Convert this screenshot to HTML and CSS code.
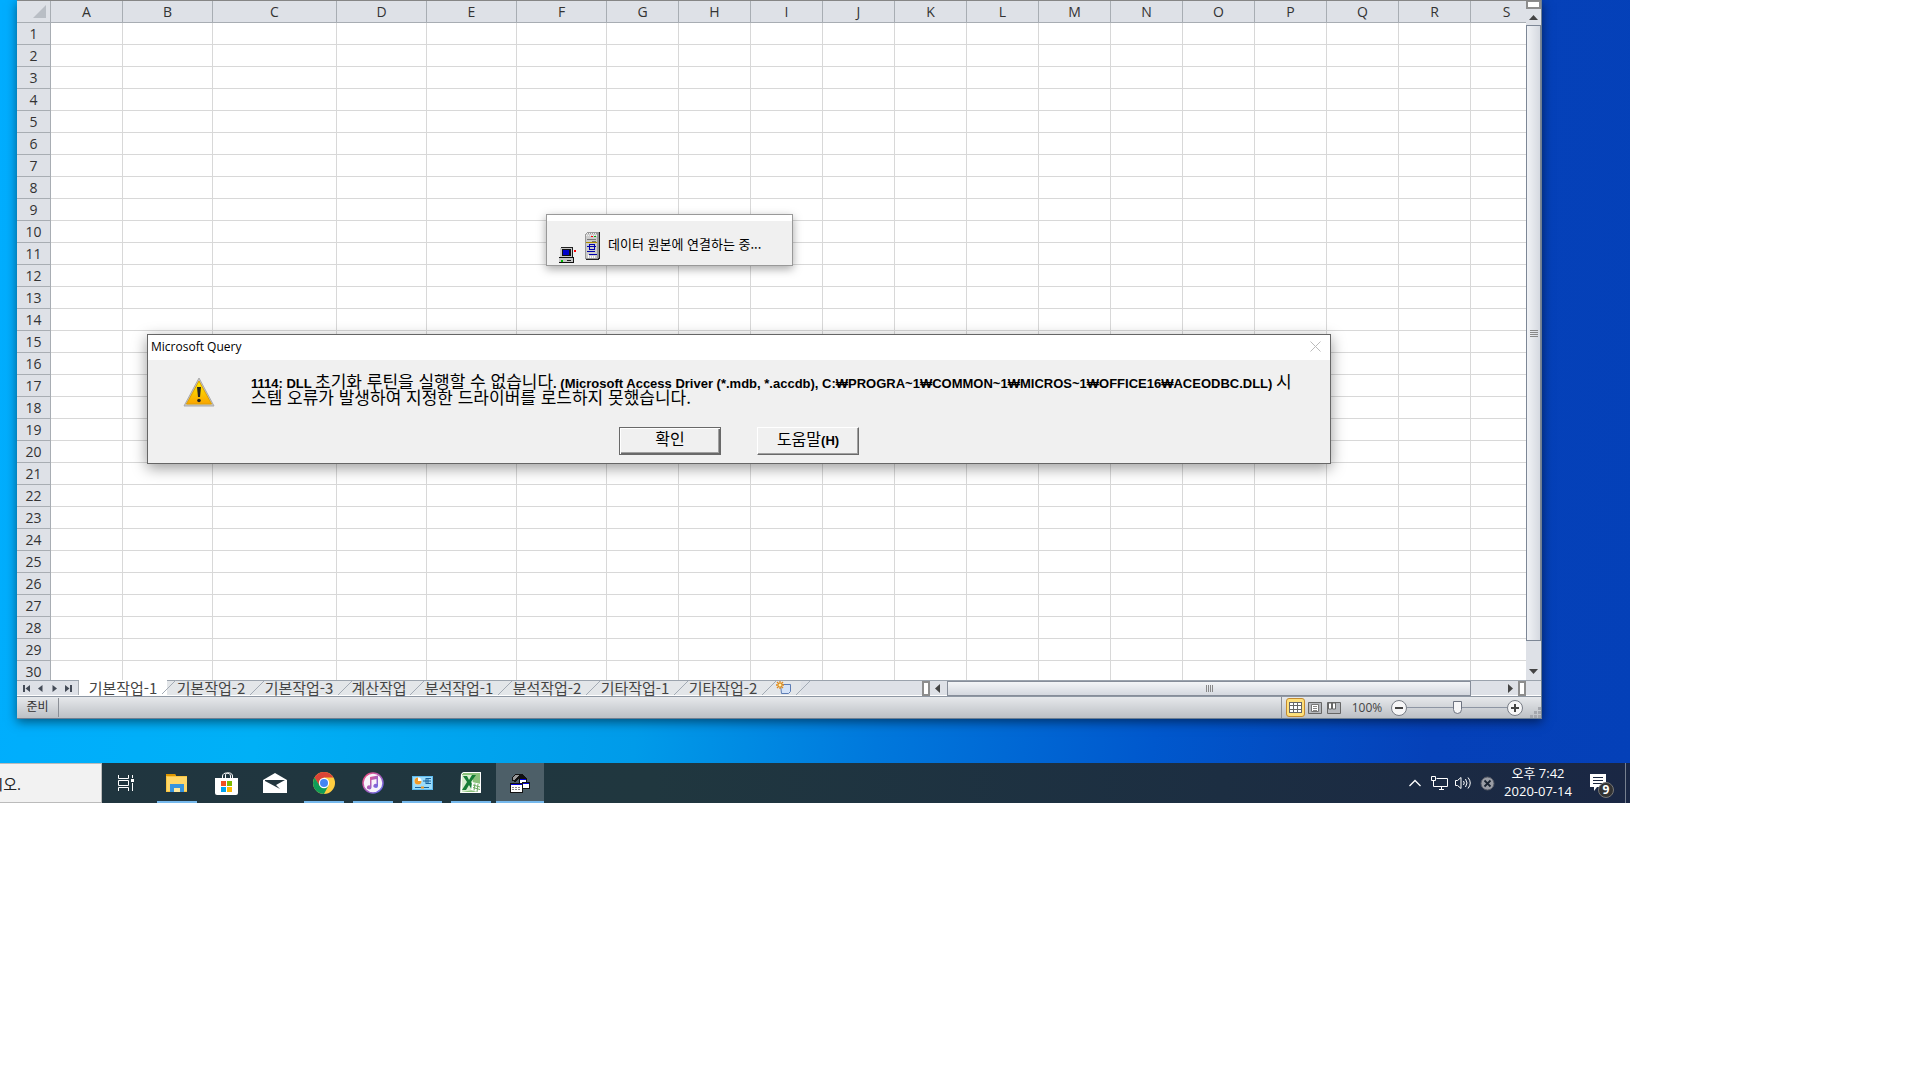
FILE: index.html
```html
<!DOCTYPE html>
<html lang="ko">

<head>
    <meta charset="UTF-8">
    <meta name="viewport" content="width=device-width, initial-scale=1.0">
    <title>Microsoft Query</title>
    <link rel="stylesheet" href="styles.css">
    <script src="script.js" defer></script>
</head>

<body>
    <main class="desktop">

        <!-- Spreadsheet window -->
        <section class="workbook">
            <div class="sheet-area">
                <div class="sheet">
                    <table class="grid">
                        <colgroup id="grid-cols"></colgroup>
                        <thead>
                            <tr id="grid-head"></tr>
                        </thead>
                        <tbody id="grid-body"></tbody>
                    </table>
                </div>
                <div class="vscroll">
                    <div class="split-top"></div>
                    <button class="scroll-btn" aria-label="위로"><svg width="9" height="5"><path d="M0 5L4.500 0L9 5z" fill="#444"/></svg></button>
                    <div class="vthumb"><i></i><i></i><i></i><i></i></div>
                    <button class="scroll-btn scroll-down" aria-label="아래로"><svg width="9" height="5"><path d="M0 0H9L4.500 5z" fill="#444"/></svg></button>
                </div>
            </div>

            <!-- Sheet tabs -->
            <div class="tab-row">
                <div class="tab-nav">
                    <button aria-label="처음"><svg width="7" height="7"><path d="M0 0h2v7H0zM7 0v7L2.500 3.500z" fill="#444b57"/></svg></button>
                    <button aria-label="이전"><svg width="7" height="7"><path d="M5.500 0v7L1 3.500z" fill="#444b57"/></svg></button>
                    <button aria-label="다음"><svg width="7" height="7"><path d="M1.500 0v7L6 3.500z" fill="#444b57"/></svg></button>
                    <button aria-label="마지막"><svg width="7" height="7"><path d="M5 0h2v7H5zM0 0v7l4.500-3.500z" fill="#444b57"/></svg></button>
                </div>
                <div class="tabs">
                    <button class="tab active">기본작업-1</button>
                    <button class="tab">기본작업-2</button>
                    <button class="tab">기본작업-3</button>
                    <button class="tab short">계산작업</button>
                    <button class="tab">분석작업-1</button>
                    <button class="tab">분석작업-2</button>
                    <button class="tab">기타작업-1</button>
                    <button class="tab">기타작업-2</button>
                    <button class="tab new-tab" aria-label="워크시트 삽입">
                        <svg width="16" height="14" viewBox="0 0 16 14">
                            <path d="M4.500 3.500h10v7l-2 2H5.500z" fill="#d3e2f8" stroke="#5d7db5"/>
                            <path d="M4 0v8M0 4h8M1 1l6 6M7 1L1 7" stroke="#e08a1c" stroke-width="1.300"/>
                            <circle cx="4" cy="4" r="1.500" fill="#fff3b0"/>
                        </svg>
                    </button>
                </div>
                <div class="hscroll">
                    <div class="split-side"></div>
                    <button class="scroll-btn" aria-label="왼쪽"><svg width="5" height="9"><path d="M5 0v9L0 4.500z" fill="#444"/></svg></button>
                    <div class="hthumb"><i></i><i></i><i></i><i></i></div>
                    <button class="scroll-btn" aria-label="오른쪽"><svg width="5" height="9"><path d="M0 0v9l5-4.500z" fill="#444"/></svg></button>
                    <div class="split-side"></div>
                </div>
            </div>

            <!-- Status bar -->
            <footer class="status-bar">
                <span class="status-text">준비</span>
                <div class="view-tools">
                    <button class="view-btn selected" aria-label="기본">
                        <svg width="13" height="11"><path d="M0 0h13v11H0z" fill="#666"/><path d="M1 1h3v2H1zM5 1h3v2H5zM9 1h3v2H9zM1 4h3v3H1zM5 4h3v3H5zM9 4h3v3H9zM1 8h3v2H1zM5 8h3v2H5zM9 8h3v2H9z" fill="#fff"/></svg>
                    </button>
                    <button class="view-btn" aria-label="페이지 레이아웃">
                        <svg width="14" height="12"><path d="M.5.500h13v11H.5z" fill="#b5b8bd" stroke="#666"/><path d="M3.500 2.500h7v7h-7z" fill="#fff" stroke="#777"/><path d="M5 4.500h4M5 6.500h4M5 8.500h4" stroke="#888"/></svg>
                    </button>
                    <button class="view-btn" aria-label="페이지 나누기 미리 보기">
                        <svg width="14" height="12"><path d="M.5.500h13v11H.5z" fill="#b5b8bd" stroke="#666"/><path d="M1.500 1h3v6h-3zM5.500 1h3v6h-3z" fill="#fff" stroke="#666"/></svg>
                    </button>
                    <span class="zoom-value">100%</span>
                    <button class="round-btn" aria-label="축소"><svg width="16" height="16"><circle cx="8" cy="8" r="7.500" fill="#f6f6f7" stroke="#777c85"/><path d="M4 8h8" stroke="#444" stroke-width="2"/></svg></button>
                    <input class="zoom-slider" type="range" min="0" max="200" value="100" aria-label="확대/축소">
                    <button class="round-btn" aria-label="확대"><svg width="16" height="16"><circle cx="8" cy="8" r="7.500" fill="#f6f6f7" stroke="#777c85"/><path d="M4 8h8M8 4v8" stroke="#444" stroke-width="2"/></svg></button>
                    <svg class="size-grip" width="11" height="11"><path d="M8 0h3v3H8zM4 4h3v3H4zM8 4h3v3H8zM0 8h3v3H0zM4 8h3v3H4zM8 8h3v3H8z" fill="#a4a7ad"/></svg>
                </div>
            </footer>
        </section>

        <!-- Connecting window -->
        <section class="connect-window">
            <svg class="pc-icon" width="17" height="17" shape-rendering="crispEdges">
                <path d="M2 0h12v11H2z" fill="#222"/>
                <path d="M1 1h12v9H1z" fill="#c8c8c8"/>
                <path d="M3 2h9v7H3z" fill="#111"/>
                <path d="M4 3h6v5H4z" fill="#00c"/>
                <path d="M0 10h15v6H0z" fill="#111"/>
                <path d="M0 11h14v4H0z" fill="#c8c8c8"/>
                <path d="M2 13h2v2H2z" fill="#0b0"/>
                <path d="M8 13h4v1H8z" fill="#222"/>
                <path d="M15 3h2v2h-2z" fill="#f00"/>
            </svg>
            <svg class="server-icon" width="15" height="28" shape-rendering="crispEdges">
                <path d="M2 0h13v26l-2 2H1z" fill="#222"/>
                <path d="M0 2l2-2h11l1 1v24l-2 2H0z" fill="#999"/>
                <path d="M1 2h11v24H1z" fill="#ccc"/>
                <path d="M2 1h10M1 3h11" stroke="#eee" stroke-dasharray="1 1"/>
                <path d="M6 4h2v1H6z" fill="#f00"/>
                <path d="M9 4h2v1H9z" fill="#0a0"/>
                <path d="M2 7h9v1H2zM7 9h4v1H7z" fill="#777"/>
                <path d="M1 10h11v1H1z" fill="#aa8a00"/>
                <path d="M4 12h5v1H4zM2 14h9v1H2zM4 17h6v1H4zM2 19h8v1H2zM4 22h8v1H4z" fill="#00a"/>
                <path d="M3 23h1v3H3zM5 24h1v2H5zM7 24h1v2H7zM9 24h1v2H9z" fill="#fff"/>
                <path d="M4 12h1v5H4zM9 12h1v5H9z" fill="#00a"/>
            </svg>
            <span class="connect-text">데이터 원본에 연결하는 중...</span>
        </section>

        <!-- Error dialog -->
        <section class="dialog" role="alertdialog" aria-labelledby="dialog-title">
            <header class="dialog-title">
                <span id="dialog-title">Microsoft Query</span>
                <button class="dialog-close" aria-label="닫기"><svg width="11" height="11"><path d="M.5.500l10 10M10.500.5l-10 10" stroke="#bbb"/></svg></button>
            </header>
            <div class="dialog-body">
                <svg class="warning-icon" width="32" height="32" viewBox="0 0 32 32">
                    <defs>
                        <linearGradient id="warn" x1="0" y1="0" x2="0" y2="1">
                            <stop offset="0" stop-color="#fff000"/>
                            <stop offset="1" stop-color="#f9a400"/>
                        </linearGradient>
                    </defs>
                    <path d="M16 2L31 30H1z" fill="#c6c6c6" stroke="#aaa" stroke-linejoin="round"/>
                    <path d="M16 5L28.500 28h-25z" fill="url(#warn)" stroke="#e0a000"/>
                    <path d="M14 11h4l-1 10h-2z" fill="#222"/>
                    <circle cx="16" cy="24.500" r="1.800" fill="#222"/>
                </svg>
                <p class="message">1114: DLL <span class="ko">초기화 루틴을 실행할 수 없습니다</span>. (Microsoft Access Driver (*.mdb, *.accdb), C:₩PROGRA~1₩COMMON~1₩MICROS~1₩OFFICE16₩ACEODBC.DLL) <span class="ko">시<br>스템 오류가 발생하여 지정한 드라이버를 로드하지 못했습니다.</span></p>
            </div>
            <div class="dialog-buttons">
                <button class="btn default"><span class="ko">확인</span></button>
                <button class="btn"><span class="ko">도움말</span>(H)</button>
            </div>
        </section>

        <!-- Taskbar -->
        <nav class="taskbar">
            <div class="search-box">
                <input type="text" value="시오." aria-label="검색">
            </div>
            <div class="task-list">
                <button class="task task-view" aria-label="작업 보기">
                    <svg width="18" height="18" fill="none" stroke="#fff"><path d="M1.500 1v3.500h10V1M1.500 17v-3.500h10V17M1.500 6.500h10v5h-10zM15.500 1v3M15.500 9v8"/><path d="M14 5h3v3h-3z" fill="#fff" stroke="none"/></svg>
                </button>
                <button class="task open" aria-label="파일 탐색기">
                    <svg width="22" height="20"><path d="M0 1h9l1 2h11v16H0z" fill="#f9c440"/><path d="M0 1h9l1 2H0z" fill="#dd9600"/><path d="M1 4h20v14H1z" fill="#ffd768"/><path d="M4 11h14v8h-4v-4H8v4H4z" fill="#3693dd"/><path d="M8 15h6v4H8z" fill="#ffe9a0"/></svg>
                </button>
                <button class="task" aria-label="스토어">
                    <svg width="23" height="23"><path d="M7.500 6V4c0-4 8-4 8 0v2M10.500 6V3c0-3 7-3 7 1v2" fill="none" stroke="#fff"/><path d="M0 6h23v15q0 2-2 2H2q-2 0-2-2z" fill="#fff"/><path d="M6 9h5v5H6z" fill="#f25022"/><path d="M12 9h5v5h-5z" fill="#7fba00"/><path d="M6 15h5v5H6z" fill="#00a4ef"/><path d="M12 15h5v5h-5z" fill="#ffb900"/></svg>
                </button>
                <button class="task" aria-label="메일">
                    <svg width="24" height="20"><path d="M0 7l12-7 12 7v13H0z" fill="#fff"/><path d="M2 7h20l-9 5 4 4L2 8z" fill="#22353e"/></svg>
                </button>
                <button class="task open" aria-label="Chrome">
                    <svg width="22" height="22"><circle cx="11" cy="11" r="11" fill="#ffcd40"/><path d="M1.500 5.500A11 11 0 0 1 20.500 5.500H11L6 13.500z" fill="#db4437"/><path d="M1.500 5.500A11 11 0 0 0 11 22L15.500 13.500 6.500 13.500z" fill="#0f9d58"/><circle cx="11" cy="11" r="5.200" fill="#fff"/><circle cx="11" cy="11" r="4" fill="#4285f4"/></svg>
                </button>
                <button class="task open" aria-label="iTunes">
                    <svg width="22" height="22">
                        <defs><linearGradient id="note" x1="0" y1="0" x2="1" y2="1"><stop offset="0" stop-color="#fb4f7d"/><stop offset="1" stop-color="#5b6cf5"/></linearGradient></defs>
                        <circle cx="11" cy="11" r="10" fill="#f7f3fb" stroke="url(#note)" stroke-width="1.500"/>
                        <path d="M8 5l8-1.500V14a2.300 2 0 1 1-1.500-2V7L9.500 8v7.500A2.300 2 0 1 1 8 13.500z" fill="url(#note)"/>
                    </svg>
                </button>
                <button class="task open" aria-label="제어판">
                    <svg width="21" height="16"><path d="M0 1h21v14H0z" fill="#5fbcf0"/><path d="M1 2h19v12H1z" fill="#9adcfb"/><circle cx="6" cy="6" r="3.500" fill="#fff"/><path d="M6 6V2.500A3.500 3.500 0 1 0 9.500 6z" fill="#f09a28"/><path d="M11 6h3M14 3v6M14 3.500h5M14 6h5M14 8.500h5M16 4v4" stroke="#16639d"/><path d="M3 12.500h14" stroke="#16639d"/><path d="M9 11.500h3v2H9z" fill="#f09a28"/></svg>
                </button>
                <button class="task open" aria-label="Excel">
                    <svg width="23" height="22"><path d="M1 2l2-2h18v21H0z" fill="#e4f3df"/><path d="M1.500 2.500l2-2h17v20h-19z" fill="#8bc27c" stroke="#fff"/><path d="M2 3h11v15L2 20z" fill="#d6edce"/><path d="M3 4h4l2 4 3-5h4l-5 7 5 8h-4l-3-5-3 5H2l5-8z" fill="#167c36"/><path d="M12 10l9 2-1 9-9-3z" fill="#fff"/><path d="M13 13l7 2M13 15.500l7 2M15 11.500l-1 7M18 12l-1 8" stroke="#6baa60"/></svg>
                </button>
                <button class="task open current" aria-label="Microsoft Query">
                    <svg width="20" height="21" shape-rendering="crispEdges"><path d="M2 8V4l3-3h7l4 3v4h-4l-3-3-3 4z" fill="#111"/><path d="M3 7V4l3-2h3L5 7z" fill="#999"/><path d="M9 5h8v8H9z" fill="#111"/><path d="M10 6h6v6h-6z" fill="#fff"/><path d="M10 6h6v1h-6z" fill="#00d"/><path d="M12 9h8v7h-8z" fill="#111"/><path d="M13 10h6v5h-6z" fill="#fff"/><path d="M13 10h6v1h-6z" fill="#00d"/><path d="M0 10h13v10H0z" fill="#111"/><path d="M1 11h11v8H1z" fill="#fff"/><path d="M1 11h11v1H1z" fill="#00d"/><path d="M2 14.500h9M2 16.500h9" stroke="#888" stroke-dasharray="2 1"/></svg>
                </button>
            </div>
            <div class="tray">
                <button class="tray-btn" aria-label="숨겨진 아이콘"><svg width="12" height="8"><path d="M.5 7L6 1.500 11.500 7" fill="none" stroke="#fff" stroke-width="1.300"/></svg></button>
                <button class="tray-btn" aria-label="네트워크"><svg width="17" height="14" fill="none" stroke="#fff"><path d="M5.500 2.500h11v8H5M8 13.500h5M10.500 10.500v3M2.500 6v4.500H5"/><path d="M.5.500h4v4h-4z"/><path d="M2.500 4.500v2"/></svg></button>
                <button class="tray-btn" aria-label="볼륨"><svg width="17" height="14" fill="none" stroke="#fff"><path d="M.5 4.500h2l3.500-3v11l-3.500-3h-2zM8.500 5q1.500 2 0 4M10.500 3q3 4 0 8M13 1.500q4.500 5.500 0 11"/></svg></button>
                <button class="tray-btn" aria-label="보안"><svg width="15" height="15"><circle cx="7.500" cy="7.500" r="6.500" fill="#9a9da5" stroke="#555a66"/><path d="M4.500 4.500l6 6M10.500 4.500l-6 6" stroke="#1b2533" stroke-width="1.800"/></svg></button>
                <button class="clock"><span>오후 7:42</span><span>2020-07-14</span></button>
                <button class="notice" aria-label="알림">
                    <svg width="16" height="17"><path d="M0 0h16v13H7l-3 4v-4H0z" fill="#fff"/><path d="M3 3.500h10M3 6.500h10M3 9.500h10" stroke="#1b2740"/></svg>
                    <span class="badge">9</span>
                </button>
                <div class="show-desktop"></div>
            </div>
        </nav>
    </main>
</body>

</html>
```
FILE: styles.css
```css
/* Colors shared by the window chrome */
:root {
    --chrome: #dee1e7;
    --chrome-line: #a8adb3;
    --grid-line: #d8d8d8;
    --dialog-bg: #f0f0f0;
    --ui-font: "Open Sans", "Noto Sans CJK KR", sans-serif;
    --ko-font: "Noto Sans CJK KR", sans-serif;
}

* {
    box-sizing: border-box;
}

body {
    margin: 0;
    background: #fff;
    font-family: var(--ui-font);
    font-size: 13px;
}

button,
input {
    margin: 0;
    padding: 0;
    border: 0;
    background: none;
    font: inherit;
    color: inherit;
}

svg {
    display: block;
    flex: none;
}

/* Desktop */
.desktop {
    position: relative;
    width: calc(100% - 290px);
    overflow: hidden;
    background: linear-gradient(97deg, #00adff 0%, #00b0f6 20%, #009be9 42%, #0078dc 56%, #0058cd 72%, #0541b9 88%, #0440b8 100%);
}

/* Spreadsheet window */
.workbook {
    margin: 0 88px 44px 17px;
    border: 1px solid #6d7f92;
    border-width: 0 1px 1px 0;
    background: var(--chrome);
    box-shadow: 0 3px 10px rgba(0, 0, 0, 0.5);
}

.sheet-area {
    display: flex;
    height: 680px;
}

.sheet {
    flex: 1;
    min-width: 0;
    overflow: hidden;
    background: #fff;
}

.grid {
    width: 1526px;
    table-layout: fixed;
    border-collapse: separate;
    border-spacing: 0;
    border-top: 1px solid #868686;
}

.grid th,
.grid td {
    height: 22px;
    padding: 0;
    border-right: 1px solid var(--grid-line);
    border-bottom: 1px solid var(--grid-line);
    line-height: 20px;
}

.grid th {
    background: var(--chrome);
    border-color: var(--chrome-line);
    font-size: 14px;
    font-weight: normal;
    color: #333;
    text-align: center;
}

.corner svg {
    margin: 0 4px 0 auto;
}

/* Scroll bars */
.vscroll {
    display: flex;
    flex-direction: column;
    width: 15px;
    border-top: 1px solid #868686;
    background: var(--chrome);
}

.split-top {
    height: 8px;
    border: 2px solid #8d8d8d;
    border-top-width: 1px;
    background: #fff;
}

.scroll-btn {
    display: flex;
    align-items: center;
    justify-content: center;
    width: 15px;
    height: 16px;
}

.vthumb {
    display: flex;
    flex: 1;
    flex-direction: column;
    align-items: center;
    justify-content: center;
    gap: 1px;
    margin-bottom: 22px;
    border: 1px solid #7d8796;
    background: linear-gradient(90deg, #f1f3f6, #d5d9e0);
}

.vthumb i {
    width: 8px;
    height: 1px;
    background: #888;
}

.scroll-down {
    margin-bottom: 1px;
}

.hscroll {
    display: flex;
    flex: 1;
    align-items: center;
    margin-right: 15px;
}

.split-side {
    width: 8px;
    height: 15px;
    border: 2px solid #8d8d8d;
    background: #fff;
}

.hthumb {
    display: flex;
    flex: 1;
    align-items: center;
    justify-content: center;
    gap: 1px;
    height: 15px;
    margin: 0 32px 0 2px;
    border: 1px solid #868d99;
    background: linear-gradient(#f4f5f7, #d4d8df);
}

.hthumb i {
    width: 1px;
    height: 7px;
    background: #888;
}

/* Sheet tabs */
.tab-row {
    display: flex;
    height: 16px;
    border-top: 1px solid #9ba3ad;
    border-bottom: 1px solid #fff;
}

.tab-nav {
    display: flex;
    align-items: center;
    justify-content: space-between;
    width: 62px;
    padding: 0 6px;
    border-right: 1px solid var(--chrome-line);
}

.tabs {
    display: flex;
    width: 843px;
}

.tab {
    position: relative;
    width: 88px;
    height: 14px;
    background: #e3e6e9;
    font-family: var(--ko-font);
    font-size: 15px;
    line-height: 12px;
    color: #444;
    white-space: nowrap;
}

/* Slanted edge between two tabs */
.tab::after {
    content: "";
    position: absolute;
    top: 0;
    right: -9px;
    z-index: 1;
    width: 14px;
    height: 14px;
    background: linear-gradient(135deg, transparent 47%, #a3abb5 47%, #a3abb5 53%, transparent 53%);
}

.tab.active {
    margin-top: -1px;
    height: 15px;
    background: #fff;
}

.tab.short {
    width: 72px;
}

.tab.new-tab {
    display: flex;
    align-items: center;
    justify-content: center;
    width: 34px;
}

/* Status bar */
.status-bar {
    display: flex;
    justify-content: space-between;
    height: 22px;
    border-top: 1px solid #8e97a3;
    background: linear-gradient(#e6e8eb, #bcc0c5);
}

.status-text {
    width: 42px;
    margin: 1px 0;
    border-right: 1px solid #8b8f96;
    font-size: 12px;
    line-height: 18px;
    text-align: center;
    color: #333;
}

.view-tools {
    display: flex;
    align-items: center;
    padding-left: 4px;
    border-left: 1px solid #8b8f96;
}

.view-btn {
    display: flex;
    align-items: center;
    justify-content: center;
    width: 19px;
    height: 19px;
}

.view-btn.selected {
    border: 1px solid #c28a30;
    border-radius: 3px;
    background: #ffe07a;
}

.zoom-value {
    width: 48px;
    font-size: 12px;
    line-height: 18px;
    text-align: center;
    color: #444;
}

.zoom-slider {
    width: 100px;
    height: 16px;
    appearance: none;
    background: linear-gradient(#8d95a3, #8d95a3) center / 100% 1px no-repeat;
}

.zoom-slider::-webkit-slider-thumb {
    appearance: none;
    width: 9px;
    height: 13px;
    border: 1px solid #6d7380;
    border-radius: 0 0 5px 5px;
    background: #f6f6f7;
}

.size-grip {
    align-self: flex-end;
    margin-left: 7px;
}

/* Connecting window */
.connect-window {
    position: absolute;
    top: 214px;
    left: 546px;
    display: flex;
    align-items: flex-end;
    width: 247px;
    height: 52px;
    padding: 0 0 1px 12px;
    border: 1px solid #999;
    background: linear-gradient(#fff 6px, var(--dialog-bg) 6px);
    box-shadow: 0 3px 9px rgba(0, 0, 0, 0.35);
    color: #000;
}

.pc-icon {
    margin-right: 9px;
}

.server-icon {
    margin: 0 8px 4px 0;
}

.connect-text {
    font-family: var(--ko-font);
    font-size: 13px;
    line-height: 20px;
    padding-bottom: 10px;
}

/* Error dialog */
.dialog {
    position: absolute;
    top: 334px;
    left: 147px;
    width: 1184px;
    border: 1px solid #666;
    background: var(--dialog-bg);
    box-shadow: 0 4px 14px rgba(0, 0, 0, 0.4);
    color: #000;
}

.dialog-title {
    display: flex;
    align-items: center;
    justify-content: space-between;
    height: 25px;
    padding: 0 9px 2px 3px;
    background: #fff;
    font-size: 12px;
}

.dialog-body {
    display: flex;
    gap: 36px;
    padding: 16px 0 0 35px;
}

.message {
    margin: 0;
    font: bold 13px/16px "Liberation Sans", "Noto Sans CJK KR", sans-serif;
    white-space: nowrap;
}

/* Hangul is larger than the Latin text but must not grow the line */
.ko {
    font-family: var(--ko-font);
    font-size: 17px;
    font-weight: normal;
    line-height: 0;
}

.dialog-buttons {
    display: flex;
    justify-content: center;
    gap: 36px;
    padding: 19px 0 8px;
}

.btn {
    width: 102px;
    height: 28px;
    border: 1px solid;
    border-color: #fff #696969 #696969 #fff;
    background: var(--dialog-bg);
    box-shadow: inset -1px -1px #a0a0a0;
    font: bold 13px/16px "Liberation Sans", sans-serif;
}

.btn .ko {
    font-size: 16px;
}

.btn.default {
    border-color: #696969;
    box-shadow: inset 1px 1px #fff, inset -1px -1px #696969, inset -2px -2px #a0a0a0;
}

/* Taskbar */
.taskbar {
    display: flex;
    height: 40px;
    background: linear-gradient(90deg, #20353f, #20373f 40%, #1c2e42 75%, #1a2744);
    color: #fff;
}

.search-box {
    display: flex;
    justify-content: flex-end;
    width: 102px;
    overflow: hidden;
    border: 1px solid #bbb;
    border-left: 0;
    background: #f2f2f2;
}

.search-box input {
    flex: none;
    width: 160px;
    padding-right: 80px;
    font-size: 15px;
    text-align: right;
    color: #222;
}

.task-list {
    display: flex;
    flex: 1;
    gap: 1px;
}

.task {
    display: flex;
    align-items: center;
    justify-content: center;
    width: 48px;
    height: 40px;
}

.task-view {
    margin-right: 2px;
}

.task.open {
    background: linear-gradient(#76b9ed, #76b9ed) center bottom / 40px 2px no-repeat;
}

.task.current {
    background: linear-gradient(#76b9ed, #76b9ed) center bottom / 48px 2px no-repeat #4d5f68;
}

.tray {
    display: flex;
    align-items: center;
}

.tray-btn {
    display: flex;
    align-items: center;
    justify-content: center;
    width: 24px;
    height: 40px;
}

.clock {
    display: flex;
    flex-direction: column;
    align-items: center;
    width: 78px;
    padding-bottom: 2px;
    font-size: 13px;
    line-height: 18px;
}

.notice {
    position: relative;
    display: flex;
    align-items: flex-start;
    width: 36px;
    height: 40px;
    padding: 11px 0 0 13px;
}

.badge {
    position: absolute;
    top: 19px;
    left: 21px;
    width: 16px;
    height: 16px;
    border: 1px solid #777;
    border-radius: 50%;
    background: #333;
    font-size: 12px;
    font-weight: bold;
    line-height: 14px;
    text-align: center;
}

.show-desktop {
    width: 5px;
    height: 40px;
    margin-left: 12px;
    border-left: 1px solid #76808f;
}
```
FILE: script.js
```js
// Column letters with their widths, row header first
const columns = "ABCDEFGHIJKLMNOPQRS".split("");
const wide = { B: 90, C: 124, D: 90, E: 90, F: 90 };
const widths = [34].concat(columns.map(c => wide[c] || 72));
const rowCount = 30;

document.getElementById("grid-cols").innerHTML =
    widths.map(w => `<col style="width: ${w}px">`).join("");

document.getElementById("grid-head").innerHTML =
    '<th class="corner"><svg width="13" height="13"><path d="M13 0v13H0z" fill="#b9bec5"/></svg></th>' +
    columns.map(c => `<th scope="col">${c}</th>`).join("");

let rows = "";
for (let i = 1; i <= rowCount; i++) {
    rows += `<tr><th scope="row">${i}</th>${"<td></td>".repeat(columns.length)}</tr>`;
}
document.getElementById("grid-body").innerHTML = rows;
```
